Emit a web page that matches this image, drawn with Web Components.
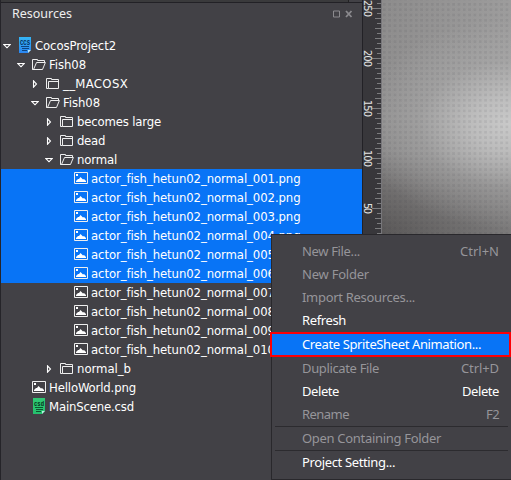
<!DOCTYPE html>
<html lang="en"><head><meta charset="utf-8"><title>Resources</title>
<style>html,body{margin:0;width:511px;height:480px;overflow:hidden;background:#414045}</style></head>
<body><studio-window></studio-window>
<script>
const define=(name,render,after)=>customElements.define(name,class extends HTMLElement{
  connectedCallback(){
    if(this.shadowRoot)return;
    this.attachShadow({mode:'open'}).innerHTML=render(this);
    if(after)after(this);
  }
});

/* Text set to an exact advance width by spreading letter spacing. */
define('fit-text',()=>`<style>:host{display:inline-block;white-space:pre}span{display:inline-block}</style><span></span>`,el=>{
  const s=el.shadowRoot.querySelector('span');
  s.textContent=el.getAttribute('text');
  const w=+el.getAttribute('w');
  if(w){
    s.style.letterSpacing=((w-s.getBoundingClientRect().width)/s.textContent.length)+'px';
  }
});

const icons={
  open:`<path d="M1 11.5H.5V1.5H5.5V2.5H12.5V4M.5 11.5H10.5L13.4 4.5H4.5L1.5 11.5"/>`,
  folder:`<path d="M2.5 11.5H.5V1.5H5.5V2.5H12.5V5M2.5 4.5H12.5V11.5H2.5Z"/>`,
  image:`<path d="M.5 1.5H13.5V12.5H.5Z"/><path stroke="none" fill="#fff" d="M2 11V10L4 8L5 8L6.5 6L9 8.5L10 8L12 10V11ZM2 3H4V5H2Z"/>`
};
const doc=(a,b,ink,label)=>`<svg width="14" height="16" viewBox="0 0 14 16"><defs><linearGradient id="g" x2="0" y2="1"><stop stop-color="${a}"/><stop offset="1" stop-color="${b}"/></linearGradient></defs><path fill="url(#g)" d="M1 0H13V13L10 16H1Z"/><path fill="#dff" d="M10 16V13H13Z" opacity=".8"/><text x="7" y="7.8" text-anchor="middle" textLength="10" lengthAdjust="spacingAndGlyphs" font-family="Liberation Mono" font-weight="bold" font-size="7.5" fill="${ink}">${label}</text><path stroke="${ink}" d="M3 9.5H11M4 11.5H11M4 13.5H9" opacity=".75"/></svg>`;
define('file-icon',el=>{
  const k=el.getAttribute('kind');
  const body=k==='ccs'?doc('#35b5f5','#2b86f0','#042a58','CCS'):k==='csd'?doc('#2fc873','#25c06e','#04301a','csd'):
   `<svg width="14" height="13" viewBox="0 0 14 13" fill="none" stroke="#eee">${icons[k]}</svg>`;
  return `<style>:host{display:flex;width:14px;height:19px;align-items:flex-start;justify-content:center;box-sizing:border-box;padding-top:${k==='ccs'||k==='csd'?1:k==='image'?2:3}px}svg{display:block}</style>${body}`;
});

define('tree-row',el=>{
  const a=n=>el.getAttribute(n),t=a('toggle');
  const tri=t==='open'?'<path d="M.8 2.5H7.2L4 5.8Z"/>':t==='closed'?'<path d="M2.5 .8V7.2L5.5 4Z"/>':'';
  return `<style>:host{display:flex;height:19px;align-items:center;box-sizing:border-box;padding-left:${2+14*a('depth')}px;color:#fff;font:13px/19px "DejaVu Sans Condensed","DejaVu Sans",sans-serif;font-stretch:condensed}
  :host([selected]){background:#0874f6}.t{width:8px;height:8px;margin-right:7px;flex:none}file-icon{margin-right:3px;flex:none}</style>
  <svg class="t" viewBox="0 0 8 8" fill="none" stroke="#fff" stroke-width="1.1">${tri}</svg><file-icon kind="${a('icon')}"></file-icon><fit-text text="${a('label')}" w="${a('w')}"></fit-text>`;
});

define('resource-panel',()=>{
  const rows=[[0,'open','ccs','CocosProject2',81],[1,'open','open','Fish08',37],[2,'closed','folder','__MACOSX',65],[2,'open','open','Fish08',37],[3,'closed','folder','becomes large',84],[3,'closed','folder','dead',28],[3,'open','open','normal',40]];
  for(let i=1;i<=10;i++)rows.push([4,'','image',`actor_fish_hetun02_normal_0${String(i).padStart(2,'0')}.png`,209.5,i<7]);
  rows.push([3,'closed','folder','normal_b',54],[1,'','image','HelloWorld.png',87],[1,'','csd','MainScene.csd',85]);
  return `<style>:host{display:flex;flex-direction:column;width:363px;height:480px;box-sizing:border-box;border-left:1px solid #252429;border-right:1px solid #222126;background:#424146}
  .strip{height:2px;background:linear-gradient(90deg,#3a3a3c 347px,#222 347px,#222 348px,#424146 348px);border-bottom:1px solid #222126;flex:none}
  header{display:flex;align-items:center;height:22px;padding:0 9px 0 11px;margin-bottom:11px;color:#eee;font:12.5px/22px "Noto Sans",sans-serif}
  header svg{margin-left:auto}</style><div class="strip"></div>
  <header><fit-text text="Resources" w="60"></fit-text><svg width="20" height="8" fill="none" stroke="#8b8a8e"><path d="M.5 1H6.5V7H.5Z"/><path stroke-width="1.8" d="M13 1L18.5 7M18.5 1L13 7"/></svg></header>
  ${rows.map(r=>`<tree-row depth="${r[0]}" toggle="${r[1]}" icon="${r[2]}" label="${r[3]}" w="${r[4]}" ${r[5]?'selected':''}></tree-row>`).join('')}`;
});

define('ruler-strip',()=>{
  let d='';
  for(let y=3,i=-1;y<234;y+=5,i++)d+=`M${i%10===0?9:i%2?14:12} ${y+.5}H18`;
  const n=[250,200,150,100,50].map((v,i)=>`<text transform="translate(.7 ${8.5+50*i}) rotate(90)" text-anchor="middle" textLength="${v===50?11:17}">${v}</text>`).join('');
  return `<style>:host{display:block;width:18px;height:234px;background:#38373b}svg{display:block}text{font:11px "DejaVu Sans Condensed",sans-serif;fill:#e4e4e4}</style><svg width="18" height="234"><path d="${d}" stroke="#7c7c7e"/>${n}</svg>`;
});

define('scene-canvas',()=>`<style>:host{display:block;flex:1;height:234px;box-sizing:border-box;border-left:1px solid #77767a;
  background:conic-gradient(from 0deg at 3px 3px,transparent 75%,rgba(50,50,60,.09) 0) 1px 3px/5.333px 5.333px,
  radial-gradient(ellipse 150px 105px at 127px 124px,rgba(203,203,203,.95) 0,rgba(197,197,197,.8) 25%,rgba(175,175,175,.4) 60%,rgba(150,150,150,0) 100%),
  linear-gradient(90deg,rgba(190,190,190,0),rgba(190,190,190,.33)),
  linear-gradient(#8d8c8c 0,#919090 50%,#8a8989 65%,#6e6c6c 82%,#5d5b5b 96%,#5b5959)}</style>`);

define('menu-item',el=>{
  const k=el.getAttribute('key');
  return `<style>:host{display:flex;justify-content:space-between;align-items:center;height:23px;box-sizing:border-box;padding:0 12px 0 30px;color:#fff;font:13px/23px "Noto Sans",sans-serif}
  :host([disabled]){color:#96959a}:host([active]){height:25px;margin:0 0 0 -2px;padding-left:30px;border:2px solid #fb0006;background:#0874f6}</style>
  <fit-text text="${el.getAttribute('label')}" w="${el.getAttribute('w')}"></fit-text>${k?`<fit-text text="${k}" w="${el.getAttribute('kw')}"></fit-text>`:''}`;
});

define('context-menu',()=>{
  const item=(l,w,s='',k='',kw='')=>`<menu-item label="${l}" w="${w}" ${s} key="${k}" kw="${kw}"></menu-item>`;
  return `<style>:host{display:block;position:absolute;left:271px;top:234px;width:240px;height:246px;box-sizing:border-box;border:1px solid #29282c;border-right:0;padding-top:5px;background:#424146}
  hr{margin:0 3px;border:0;height:1px;background:#2c2b2f}</style>
  ${item('New File...',58,'disabled','Ctrl+N',39)}${item('New Folder',67,'disabled')}${item('Import Resources...',113,'disabled')}${item('Refresh',44)}${item('Create SpriteSheet Animation...',179,'active')}${item('Duplicate File',77,'disabled','Ctrl+D',38)}${item('Delete',37,'','Delete',37)}${item('Rename',47,'disabled','F2',13)}<hr>${item('Open Containing Folder',139,'disabled')}<hr>${item('Project Setting...',93)}`;
});

define('studio-window',()=>`<style>:host{display:flex;position:relative;width:511px;height:480px;overflow:hidden}</style><resource-panel></resource-panel><ruler-strip></ruler-strip><scene-canvas></scene-canvas><context-menu></context-menu>`);
</script></body></html>
